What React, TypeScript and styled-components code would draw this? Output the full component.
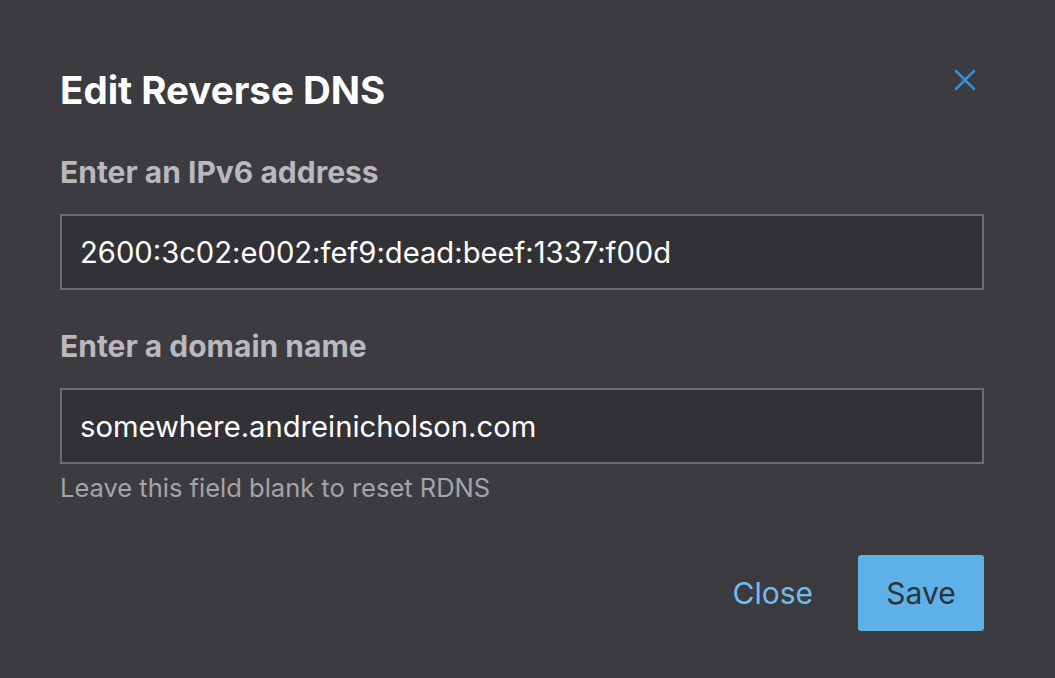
import React from "react";
import styled, { createGlobalStyle } from "styled-components";

const Global = createGlobalStyle`
  html, body { margin: 0; padding: 0; background: #3b3b40; }
  body { font-family: "Inter", "Lato", sans-serif; }
  * { box-sizing: border-box; }
`;

const Dialog = styled.div`
  width: 1055px;
  height: 678px;
  background: #3b3b40;
  padding: 62px 71px 0 60px;
  display: flex;
  flex-direction: column;
`;

const Header = styled.div`
  display: flex;
  align-items: center;
  justify-content: space-between;
  height: 56px;
`;

const Title = styled.h2`
  margin: 0;
  font-size: 38.5px;
  font-weight: 700;
  color: #ffffff;
`;

const CloseIcon = styled.button`
  background: none;
  border: none;
  padding: 0;
  width: 26px;
  height: 26px;
  margin-right: 6px;
  margin-top: -20px;
  display: flex;
  align-items: center;
  justify-content: center;
  cursor: pointer;
`;

const Field = styled.div<{ $top: number }>`
  display: flex;
  flex-direction: column;
  margin-top: ${(p) => p.$top}px;
`;

const Label = styled.label`
  font-size: 30px;
  font-weight: 700;
  color: #b8b8be;
  line-height: 36px;
  margin-bottom: 24px;
`;

const Input = styled.input`
  width: 100%;
  height: 76px;
  background: #323236;
  border: 2px solid #6c6c71;
  padding: 0 18px;
  font-family: inherit;
  font-size: 29.2px;
  color: #ffffff;
  outline: none;
`;

const Helper = styled.div`
  margin-top: 8px;
  font-size: 25.5px;
  color: #a4a4aa;
`;

const Actions = styled.div`
  margin-top: 52px;
  display: flex;
  justify-content: flex-end;
  align-items: center;
  gap: 45px;
`;

const TextButton = styled.button`
  background: none;
  border: none;
  padding: 0;
  font-family: inherit;
  font-size: 30px;
  color: #74bbee;
  cursor: pointer;
`;

const PrimaryButton = styled.button`
  width: 126px;
  height: 76px;
  background: #5db1e8;
  border: none;
  border-radius: 3px;
  font-family: inherit;
  font-size: 30px;
  color: #2f343b;
  cursor: pointer;
`;

export default function App() {
  return (
    <>
      <Global />
      <Dialog>
        <Header>
          <Title>Edit Reverse DNS</Title>
          <CloseIcon aria-label="close">
            <svg width="22" height="22" viewBox="0 0 22 22">
              <path d="M2 2 L20 20 M20 2 L2 20" stroke="#3590d8" strokeWidth="2.6" strokeLinecap="round" />
            </svg>
          </CloseIcon>
        </Header>
        <Field $top={36}>
          <Label>Enter an IPv6 address</Label>
          <Input defaultValue="2600:3c02:e002:fef9:dead:beef:1337:f00d" />
        </Field>
        <Field $top={38}>
          <Label>Enter a domain name</Label>
          <Input defaultValue="somewhere.andreinicholson.com" />
          <Helper>Leave this field blank to reset RDNS</Helper>
        </Field>
        <Actions>
          <TextButton>Close</TextButton>
          <PrimaryButton>Save</PrimaryButton>
        </Actions>
      </Dialog>
    </>
  );
}
